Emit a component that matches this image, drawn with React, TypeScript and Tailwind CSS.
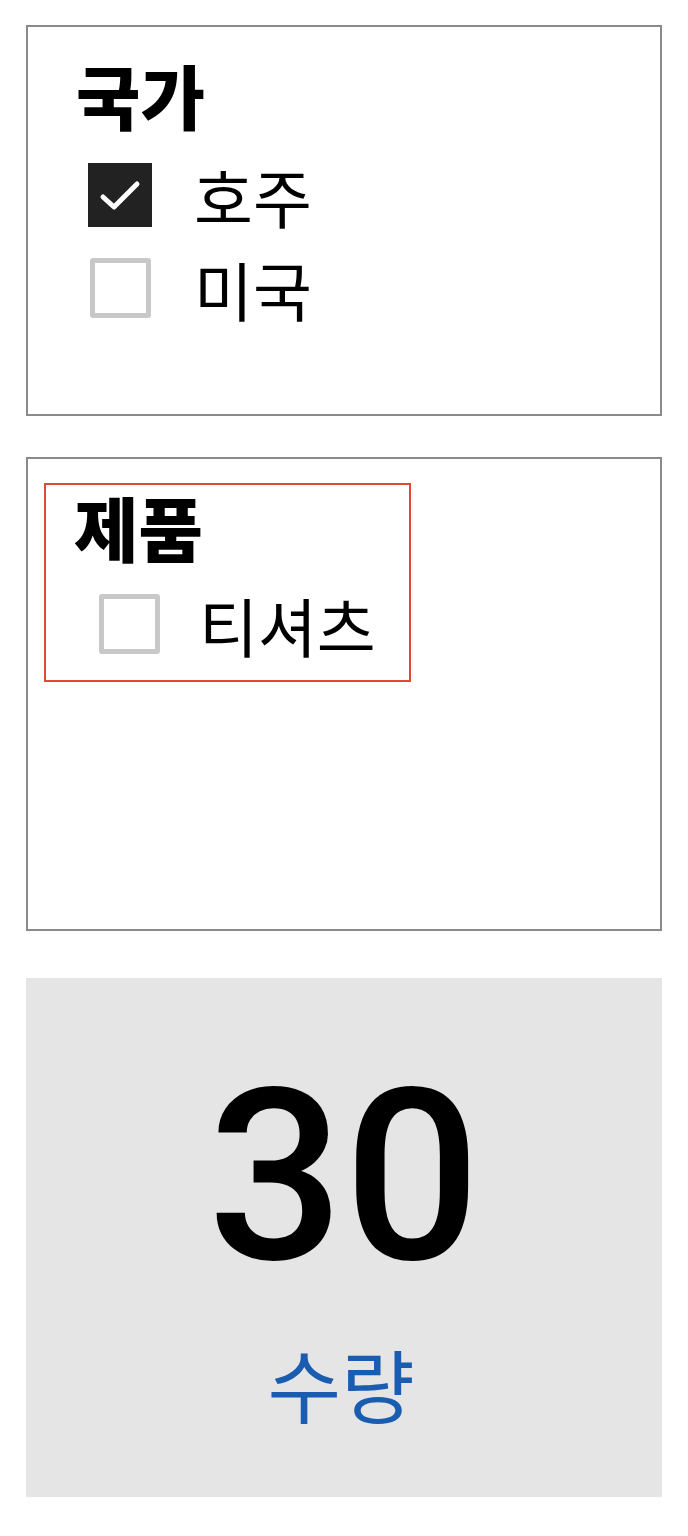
import React from 'react';

interface Option {
    label: string;
    checked: boolean;
}

const font = { fontFamily: '"Noto Sans CJK KR", "Noto Sans", sans-serif' };

const CheckBox: React.FC<{ checked: boolean }> = ({ checked }) => (
    <div className="w-[64px] h-[64px] flex items-center justify-center shrink-0">
        {checked ? (
            <div className="w-[64px] h-[64px] bg-[#222222] flex items-center justify-center">
                <svg width="64" height="64" viewBox="0 0 64 64" fill="none">
                    <path d="M15 34 L26 44 L49 21" stroke="#ffffff" strokeWidth={5} strokeLinecap="round" strokeLinejoin="round" />
                </svg>
            </div>
        ) : (
            <div className="w-[61px] h-[60px] border-[5px] border-[#c8c8c8] rounded-[3px] bg-white" />
        )}
    </div>
);

const OptionRow: React.FC<{ option: Option; tight?: boolean }> = ({ option, tight }) => (
    <div className={`flex items-center h-[64px] ${tight ? 'gap-[38px]' : 'gap-[42px]'}`}>
        <CheckBox checked={option.checked} />
        <span className="text-[64px] leading-none text-black">{option.label}</span>
    </div>
);

const App: React.FC = () => {
    const countries: Option[] = [
        { label: '호주', checked: true },
        { label: '미국', checked: false },
    ];
    const products: Option[] = [{ label: '티셔츠', checked: false }];

    return (
        <div className="w-[688px] bg-white pt-[25px] pb-[42px] px-[26px] flex flex-col" style={font}>
            {/* 국가 필터 */}
            <div className="h-[391px] border-2 border-[#8a8a8a] pt-[33px] pl-[48px]">
                <h2 className="text-[70px] font-black leading-none text-black">국가</h2>
                <div className="mt-[33px] pl-[12px] flex flex-col gap-[29px]">
                    {countries.map((c) => (
                        <OptionRow key={c.label} option={c} />
                    ))}
                </div>
            </div>

            {/* 제품 필터 */}
            <div className="mt-[41px] h-[474px] border-2 border-[#8a8a8a] pt-[24px] pl-[16px]">
                <div className="w-[367px] h-[199px] border-2 border-[#e04a30] pt-[7px] pl-[28px]">
                    <h2 className="text-[70px] font-black leading-none text-black">제품</h2>
                    <div className="mt-[30px] pl-[23px] flex flex-col">
                        {products.map((p) => (
                            <OptionRow key={p.label} option={p} tight />
                        ))}
                    </div>
                </div>
            </div>

            {/* 수량 카드 */}
            <div className="mt-[47px] h-[519px] bg-[#e5e5e5] flex flex-col items-center pt-[79px]">
                <div className="text-[240px] font-medium leading-none text-black" style={{ fontFamily: 'Roboto, "Noto Sans", sans-serif' }}>
                    30
                </div>
                <div className="mt-[45px] mr-[6px] text-[80px] leading-none text-[#1a5cb0]">수량</div>
            </div>
        </div>
    );
};

export default App;
